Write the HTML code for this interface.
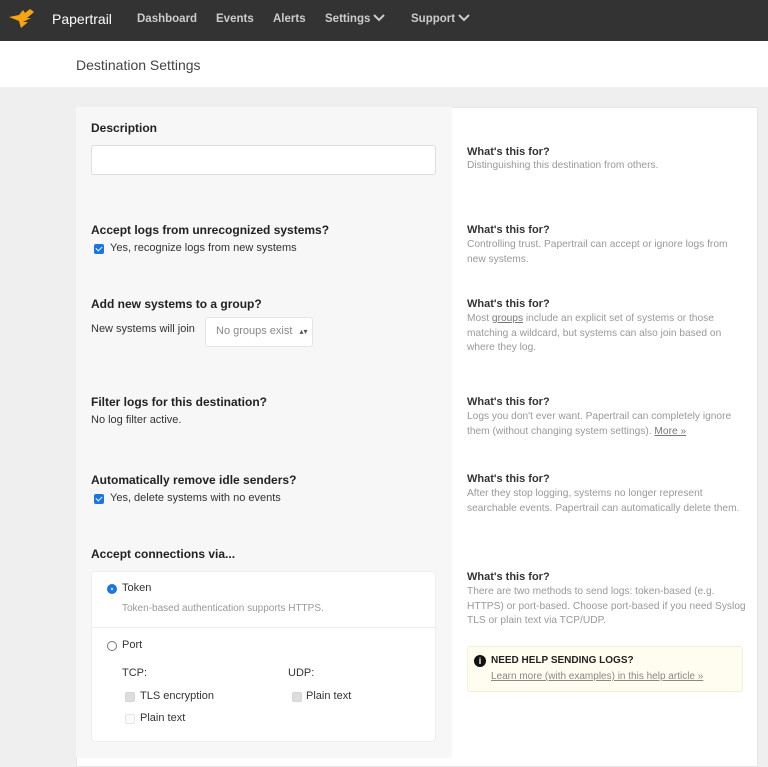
<!DOCTYPE html>
<html><head><meta charset="utf-8"><style>
*{box-sizing:border-box;margin:0;padding:0}
body{width:768px;height:765px;overflow:hidden;background:#efefef;font-family:"Liberation Sans",sans-serif;position:relative}
.a{position:absolute;white-space:nowrap}
.nav{position:absolute;left:0;top:0;width:768px;height:41px;background:#333;box-shadow:0 1px 3px rgba(0,0,0,.4)}
.nav span{position:absolute;top:13px;font-size:11.5px;color:#ccc;font-weight:bold}
.nav svg.c{position:absolute;top:14px}
.hdr{position:absolute;left:0;top:41px;width:768px;height:46px;background:#fff}
.card{position:absolute;left:76px;top:107px;width:682px;height:660px;background:#fff;border:1px solid #e6e6e6}
.left{position:absolute;left:76px;top:107px;width:376px;height:651px;background:#f7f7f7}
h3{position:absolute;font-size:12px;color:#222;font-weight:bold;white-space:nowrap}
.q{font-size:11px;color:#333;font-weight:bold}
.help{position:absolute;font-size:10.2px;color:#999;line-height:14.5px;width:278px}
.t{position:absolute;font-size:11px;color:#333;white-space:nowrap}
.cb{position:absolute;width:10px;height:10px;border-radius:2px;background:#1a73e8}
.cb:after{content:"";position:absolute;left:3px;top:1px;width:3px;height:5px;border:solid #fff;border-width:0 1.5px 1.5px 0;transform:rotate(45deg)}
.gcb{position:absolute;width:10px;height:10px;border-radius:2px;background:#ddd;border:1px solid #d5d5d5}
</style></head><body>
<div class="nav">
<svg style="position:absolute;left:8px;top:8px" width="28" height="24" viewBox="0 0 28 24"><path d="M1 9 L11 7 L15 2 L17 5 L22 1 L26 4 L19 10 L23 10 L15 14 L20 14 L13 20 L11 13 Z" fill="#f4a511"/></svg>
<span style="left:52px;top:11px;color:#fff;font-size:14px;font-weight:normal">Papertrail</span>
<span style="left:137px">Dashboard</span>
<span style="left:216px">Events</span>
<span style="left:273px">Alerts</span>
<span style="left:325px">Settings</span>
<svg class="c" style="left:373px" width="12" height="8" viewBox="0 0 12 8"><path d="M1 1 L6 6 L11 1" stroke="#ccc" stroke-width="2" fill="none"/></svg>
<span style="left:411px">Support</span>
<svg class="c" style="left:458px" width="12" height="8" viewBox="0 0 12 8"><path d="M1 1 L6 6 L11 1" stroke="#ccc" stroke-width="2" fill="none"/></svg>
</div>
<div class="hdr"><span class="a" style="left:76px;top:16px;font-size:14px;color:#444">Destination Settings</span></div>
<div class="card"></div>
<div class="left"></div>

<h3 style="left:91px;top:121px">Description</h3>
<div class="a" style="left:91px;top:145px;width:345px;height:30px;background:#fff;border:1px solid #ddd;border-radius:3px"></div>

<h3 style="left:91px;top:223px">Accept logs from unrecognized systems?</h3>
<div class="cb" style="left:94px;top:244px"></div><div class="t" style="left:110px;top:242px">Yes, recognize logs from new systems</div>

<h3 style="left:91px;top:297px">Add new systems to a group?</h3>
<div class="t" style="left:91px;top:323px">New systems will join</div>
<div class="a" style="left:205px;top:317px;width:108px;height:30px;background:#fff;border:1px solid #e5e5e5;border-radius:3px;font-size:11px;color:#888;padding:7px 0 0 10px">No groups exist <span style="font-size:8px;color:#555;margin-left:4px">▴▾</span></div>

<h3 style="left:91px;top:395px">Filter logs for this destination?</h3>
<div class="t" style="left:91px;top:414px">No log filter active.</div>

<h3 style="left:91px;top:473px">Automatically remove idle senders?</h3>
<div class="cb" style="left:94px;top:494px"></div><div class="t" style="left:110px;top:492px">Yes, delete systems with no events</div>

<h3 style="left:91px;top:547px">Accept connections via...</h3>
<div class="a" style="left:91px;top:571px;width:345px;height:171px;background:#fff;border:1px solid #eee;border-radius:4px"></div>
<div class="a" style="left:92px;top:627px;width:343px;height:1px;background:#eee"></div>
<div class="a" style="left:107px;top:584px;width:10px;height:10px;border-radius:50%;border:3px solid #1a73e8;background:#fff;box-shadow:0 0 0 1px #1a73e8 inset"></div>
<div class="t" style="left:122px;top:582px">Token</div>
<div class="a" style="left:122px;top:603px;font-size:10px;color:#999">Token-based authentication supports HTTPS.</div>
<div class="a" style="left:107px;top:641px;width:10px;height:10px;border-radius:50%;border:1px solid #777;background:#fff"></div>
<div class="t" style="left:122px;top:639px">Port</div>
<div class="t" style="left:122px;top:667px">TCP:</div>
<div class="t" style="left:288px;top:667px">UDP:</div>
<div class="gcb" style="left:125px;top:692px"></div><div class="t" style="left:140px;top:690px">TLS encryption</div>
<div class="gcb" style="left:292px;top:692px"></div><div class="t" style="left:306px;top:690px">Plain text</div>
<div class="gcb" style="left:125px;top:714px;background:#fafafa;border-color:#e5e5e5"></div><div class="t" style="left:140px;top:712px">Plain text</div>

<div class="a q" style="left:467px;top:146px">What's this for?</div>
<div class="help" style="left:467px;top:159px">Distinguishing this destination from others.</div>
<div class="a q" style="left:467px;top:224px">What's this for?</div>
<div class="help" style="left:467px;top:238px">Controlling trust. Papertrail can accept or ignore logs from new systems.</div>
<div class="a q" style="left:467px;top:298px">What's this for?</div>
<div class="help" style="left:467px;top:312px">Most <u style="color:#777">groups</u> include an explicit set of systems or those matching a wildcard, but systems can also join based on where they log.</div>
<div class="a q" style="left:467px;top:396px">What's this for?</div>
<div class="help" style="left:467px;top:410px">Logs you don't ever want. Papertrail can completely ignore them (without changing system settings). <u style="color:#777">More »</u></div>
<div class="a q" style="left:467px;top:473px">What's this for?</div>
<div class="help" style="left:467px;top:487px">After they stop logging, systems no longer represent searchable events. Papertrail can automatically delete them.</div>
<div class="a q" style="left:467px;top:571px">What's this for?</div>
<div class="help" style="left:467px;top:585px;width:300px;white-space:nowrap">There are two methods to send logs: token-based (e.g.<br>HTTPS) or port-based. Choose port-based if you need Syslog<br>TLS or plain text via TCP/UDP.</div>
<div class="a" style="left:467px;top:646px;width:276px;height:46px;background:#fffdf0;border:1px solid #f3efd8;border-radius:3px"></div>
<div class="a" style="left:474px;top:655px;width:12px;height:12px;border-radius:50%;background:#111;color:#fff;font-size:9px;font-weight:bold;text-align:center;line-height:12px">i</div>
<div class="a" style="left:491px;top:655px;font-size:10px;font-weight:bold;color:#222">NEED HELP SENDING LOGS?</div>
<div class="a" style="left:491px;top:671px;font-size:10px;color:#888;text-decoration:underline">Learn more (with examples) in this help article »</div>
</body></html>
